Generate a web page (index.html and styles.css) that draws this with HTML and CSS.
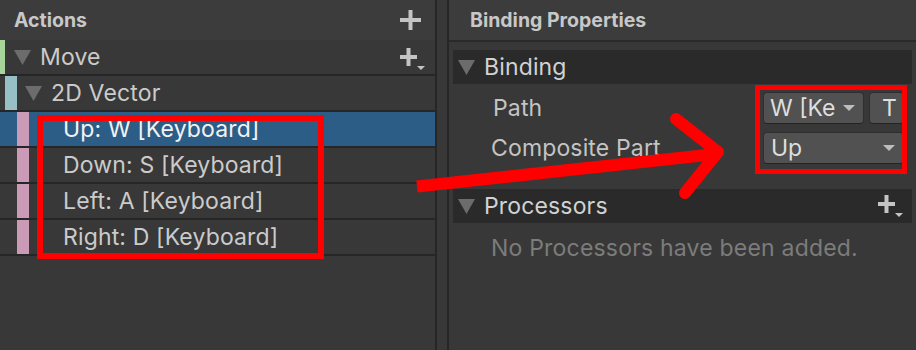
FILE: index.html
```html
<!DOCTYPE html>
<html lang="en">
<head>
    <meta charset="UTF-8">
    <title>Input Actions</title>
    <link rel="stylesheet" href="styles.css">
</head>
<body>
    <div class="editor">
        <section class="actions-pane">
            <div class="pane-header">
                <span class="pane-title">Actions</span>
                <svg class="plus" width="21" height="20" viewBox="0 0 21 20"><rect x="0" y="8" width="21" height="4"/><rect x="8.5" y="0" width="4" height="20"/></svg>
            </div>
            <div class="tree">
                <div class="tree-row">
                    <span class="bar bar-action"></span>
                    <svg class="fold" width="17" height="15" viewBox="0 0 17 15"><polygon points="0,0 17,0 8.5,15"/></svg>
                    <span class="row-text">Move</span>
                    <svg class="plus-drop" width="25" height="22" viewBox="0 0 25 22"><rect x="0" y="7" width="17" height="4"/><rect x="6.5" y="0" width="4" height="18"/><polygon points="17,18 25,18 21,22"/></svg>
                </div>
                <div class="tree-row">
                    <span class="indent indent-1"></span>
                    <span class="bar bar-composite"></span>
                    <svg class="fold fold-composite" width="17" height="15" viewBox="0 0 17 15"><polygon points="0,0 17,0 8.5,15"/></svg>
                    <span class="row-text">2D Vector</span>
                </div>
                <div class="tree-row selected">
                    <span class="indent indent-2"></span>
                    <span class="bar bar-part"></span>
                    <span class="row-text part-text">Up: W [Keyboard]</span>
                </div>
                <div class="tree-row">
                    <span class="indent indent-2"></span>
                    <span class="bar bar-part"></span>
                    <span class="row-text part-text">Down: S [Keyboard]</span>
                </div>
                <div class="tree-row">
                    <span class="indent indent-2"></span>
                    <span class="bar bar-part"></span>
                    <span class="row-text part-text">Left: A [Keyboard]</span>
                </div>
                <div class="tree-row">
                    <span class="indent indent-2"></span>
                    <span class="bar bar-part"></span>
                    <span class="row-text part-text">Right: D [Keyboard]</span>
                </div>
            </div>
        </section>

        <div class="splitter"></div>

        <section class="props-pane">
            <div class="pane-header">
                <span class="pane-title props-title">Binding Properties</span>
            </div>
            <div class="props-body">
                <div class="foldout">
                    <svg class="fold" width="17" height="15" viewBox="0 0 17 15"><polygon points="0,0 17,0 8.5,15"/></svg>
                    <span class="foldout-text">Binding</span>
                </div>
                <div class="field">
                    <span class="field-label label-path">Path</span>
                    <div class="field-controls">
                        <div class="btn btn-path">W [Ke<span class="caret"></span></div>
                        <div class="btn btn-t">T</div>
                    </div>
                </div>
                <div class="field">
                    <span class="field-label">Composite Part</span>
                    <div class="field-controls">
                        <div class="btn btn-part">Up<span class="caret"></span></div>
                    </div>
                </div>
                <div class="foldout foldout-processors">
                    <svg class="fold" width="17" height="15" viewBox="0 0 17 15"><polygon points="0,0 17,0 8.5,15"/></svg>
                    <span class="foldout-text">Processors</span>
                    <svg class="plus-drop" width="25" height="22" viewBox="0 0 25 22"><rect x="0" y="7" width="17" height="4"/><rect x="6.5" y="0" width="4" height="18"/><polygon points="17,18 25,18 21,22"/></svg>
                </div>
                <p class="empty-note">No Processors have been added.</p>
            </div>
        </section>

        <!-- annotations drawn over the screenshot -->
        <div class="mark mark-list"></div>
        <div class="mark mark-fields"></div>
        <svg class="arrow" width="916" height="350" viewBox="0 0 916 350">
            <line x1="417" y1="186.5" x2="716" y2="154" stroke="#ff0000" stroke-width="12"/>
            <polyline points="676,119 718,152 685,193" fill="none" stroke="#ff0000" stroke-width="12" stroke-linecap="round" stroke-linejoin="round"/>
        </svg>
    </div>
</body>
</html>
```

FILE: styles.css
```css
*{
    margin: 0;
    padding: 0;
    box-sizing: border-box;
}
body{
    background: #383838;
    font-family: "Inter", "Noto Sans", sans-serif;
    color: #c8c8c8;
    overflow: hidden;
}
.editor{
    position: relative;
    display: flex;
    width: 916px;
    height: 350px;
}
.actions-pane{
    width: 435px;
    border-right: 2px solid #262626;
    box-sizing: content-box;
}
.pane-header{
    height: 40px;
    background: #3c3c3c;
    display: flex;
    align-items: center;
    padding: 0 14px;
}
.pane-title{
    font-weight: 700;
    font-size: 19.5px;
    color: #c8c8c8;
}
.props-title{
    margin-left: 7px;
}
.plus{
    margin-left: auto;
    fill: #c4c4c4;
}
.plus-drop{
    margin-left: auto;
    fill: #c4c4c4;
}
.tree-row{
    display: flex;
    align-items: center;
    height: 36px;
    border-bottom: 2px solid #262626;
    padding-right: 10px;
}
.tree-row.selected{
    background: #2c5d87;
}
.tree-row .plus-drop{
    margin-top: 4px;
}
.bar{
    align-self: stretch;
}
.bar-action{
    width: 5px;
    background: #a7d49b;
}
.bar-composite{
    width: 12px;
    background: #96bfc6;
}
.bar-part{
    width: 12px;
    background: #cb9ab6;
}
.indent-1{
    width: 5px;
}
.indent-2{
    width: 17px;
}
.fold{
    fill: #6c6c6c;
    margin-left: 9px;
    flex-shrink: 0;
}
.fold-composite{
    margin-left: 8px;
}
.row-text{
    font-size: 23px;
    letter-spacing: 0.15px;
    margin-left: 9px;
    color: #cbcbcb;
}
.part-text{
    margin-left: 34px;
}
.selected .row-text{
    color: #f2f2f2;
}
.splitter{
    width: 10px;
    border-right: 2px solid #262626;
    box-sizing: content-box;
}
.props-pane{
    flex: 1;
}
.props-pane .pane-header{
    height: 42px;
    border-bottom: 2px solid #2a2a2a;
}
.props-body{
    padding: 8px 4px 0 4px;
}
.foldout{
    display: flex;
    align-items: center;
    height: 34px;
    background: #2a2a2a;
    padding-right: 9px;
}
.foldout .fold{
    margin-left: 5px;
}
.foldout-text{
    font-size: 23px;
    letter-spacing: 0.15px;
    margin-left: 9px;
    color: #d2d2d2;
}
.field{
    display: flex;
    align-items: center;
    height: 32px;
    margin-top: 8px;
}
.field-label{
    width: 310px;
    padding-left: 38px;
    font-size: 23px;
    letter-spacing: 0.15px;
    color: #c4c4c4;
}
.label-path{
    padding-left: 40px;
}
.field-controls{
    display: flex;
    gap: 5px;
    width: 141px;
}
.btn{
    height: 32px;
    background: #515151;
    border: 1px solid #2e2e2e;
    border-bottom-color: #242424;
    border-radius: 4px;
    font-size: 23px;
    color: #dedede;
    display: flex;
    align-items: center;
    padding-left: 6px;
}
.btn-path{
    width: 101px;
}
.btn-t{
    flex: 1;
    padding-left: 12px;
}
.btn-part{
    flex: 1;
    padding-left: 7px;
}
.caret{
    margin-left: auto;
    margin-right: 8px;
    width: 0;
    height: 0;
    border-left: 6px solid transparent;
    border-right: 6px solid transparent;
    border-top: 6px solid #bdbdbd;
}
.foldout-processors{
    margin-top: 25px;
}
.empty-note{
    font-size: 23px;
    letter-spacing: 0.2px;
    color: #7c7c7c;
    padding-left: 38px;
    margin-top: 11px;
}
.mark{
    position: absolute;
    border: 6px solid #ff0000;
}
.mark-list{
    left: 37px;
    top: 115px;
    width: 287px;
    height: 144px;
}
.mark-fields{
    left: 755px;
    top: 85px;
    width: 152px;
    height: 89px;
    border-width: 5px;
}
.arrow{
    position: absolute;
    left: 0;
    top: 0;
    pointer-events: none;
}
```
